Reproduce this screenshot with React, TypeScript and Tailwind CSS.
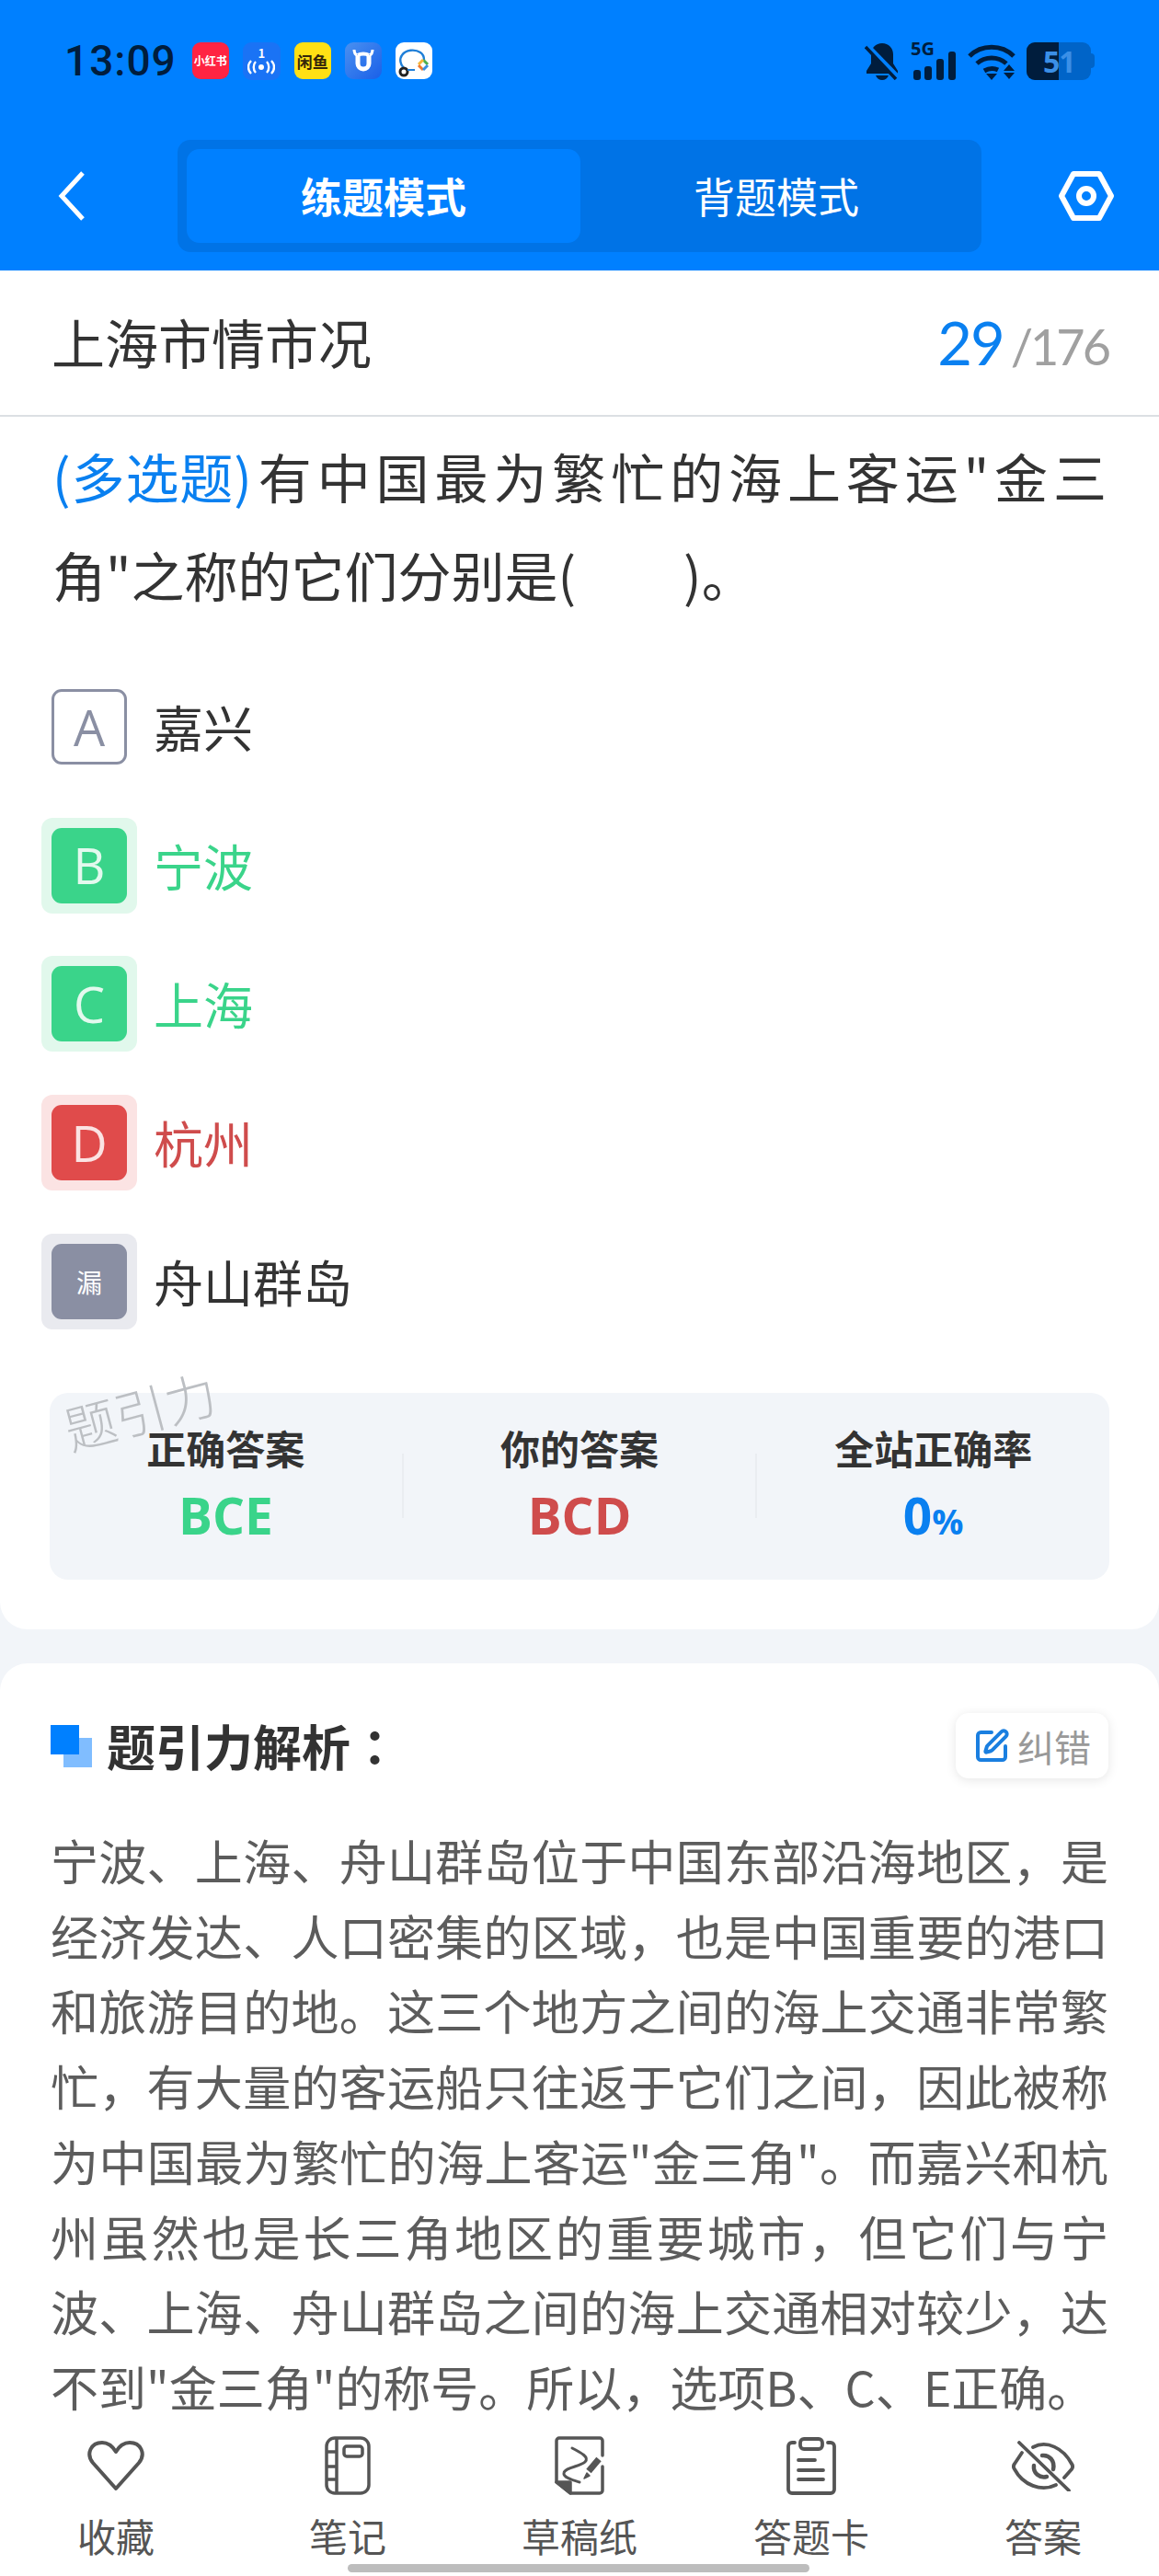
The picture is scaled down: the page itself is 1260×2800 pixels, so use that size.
import { SquarePen } from "lucide-react";

const font = "font-['Noto_Sans_CJK_SC','Noto_Sans',sans-serif]";

function Bell() {
  return (
    <svg viewBox="0 0 38 41" className="w-[38px] h-[41px]">
      <path d="M19 1c7 0 12 5 12 12v10l5 8v3H2v-3l5-8V13C7 6 12 1 19 1z" fill="#001d3d" />
      <path d="M12 36h14c-1 3-4 5-7 5s-6-2-7-5z" fill="#001d3d" />
      <path d="M2 3l34 35" stroke="#0080ff" strokeWidth="6" />
      <path d="M1 5l33 35" stroke="#001d3d" strokeWidth="3.5" />
    </svg>
  );
}

function Signal() {
  return (
    <div className="relative w-[50px] h-[41px]">
      <span className="absolute left-0 -top-[5px] text-[20px] leading-[24px] font-bold text-[#001d3d] font-['Open_Sans',sans-serif]">5G</span>
      <svg viewBox="0 0 50 41" className="absolute inset-0">
        <rect x="3" y="30" width="8" height="11" rx="3" fill="#001d3d" />
        <rect x="15" y="26" width="8" height="15" rx="3" fill="#001d3d" />
        <rect x="28" y="18" width="8" height="23" rx="3" fill="#001d3d" />
        <rect x="41" y="10" width="8" height="31" rx="3" fill="#001d3d" />
      </svg>
    </div>
  );
}

function Wifi() {
  return (
    <svg viewBox="0 0 52 41" className="w-[52px] h-[41px]" fill="none" stroke="#001d3d" strokeWidth="5">
      <path d="M2 15C15 2 37 2 50 15" />
      <path d="M10 23c9-8 23-8 32 0" />
      <path d="M18 31c5-3 11-3 15-1" />
      <path d="M20 34h12l-6 7z" fill="#001d3d" stroke="none" />
      <path d="M45 24l6 7H39z M39 33h12l-6 7z" fill="#001d3d" stroke="none" />
    </svg>
  );
}

function Battery() {
  return (
    <div className="relative flex items-center w-[74px] h-[41px]">
      <div className="flex w-[70px] h-[41px] rounded-[9px] overflow-hidden bg-[#0064c8]">
        <div className="w-[35px] bg-[#001d3d]" />
      </div>
      <div className="w-[4px] h-[16px] rounded-r bg-[#0064c8]" />
      <span className="absolute left-[18px] top-0 text-[32px] leading-[41px] font-bold text-[#3b8fe6] font-['Open_Sans',sans-serif] tracking-[-1px]">51</span>
    </div>
  );
}

function AppIcons() {
  return (
    <div className="flex items-center gap-[15px] ml-[17px]">
      <div className="w-[40px] h-[40px] rounded-[9px] bg-[#ff2442] flex items-center justify-center text-white text-[12px] font-bold whitespace-nowrap">小红书</div>
      <div className="w-[41px] h-[41px] rounded-[9px] bg-[#1a73f5] flex flex-col items-center justify-center">
        <span className="text-white text-[13px] leading-[14px] font-bold">1</span>
        <svg viewBox="0 0 30 16" className="w-[30px] h-[16px]" fill="none" stroke="white" strokeWidth="2.4">
          <circle cx="15" cy="8" r="3" fill="white" stroke="none" />
          <path d="M9 2c-3 3-3 9 0 12M21 2c3 3 3 9 0 12M4 1c-4 4-4 10 0 14M26 1c4 4 4 10 0 14" />
        </svg>
      </div>
      <div className="w-[40px] h-[40px] rounded-[9px] bg-[#ffe014] flex items-center justify-center text-[#33260a] text-[17px] leading-none font-bold whitespace-nowrap">闲鱼</div>
      <div className="w-[40px] h-[40px] rounded-[9px] bg-gradient-to-br from-[#4a90f0] to-[#1a5fe8] flex items-center justify-center">
        <svg viewBox="0 0 28 28" className="w-[28px] h-[28px]" fill="none" stroke="white" strokeWidth="5">
          <path d="M8 8v9a6 6 0 0 0 12 0V8" />
          <path d="M8 8c3-2 9-2 12 0" strokeWidth="4" />
          <path d="M4 2c0 3 1 5 3 6M24 2c0 3-1 5-3 6" strokeWidth="3" />
        </svg>
      </div>
      <div className="w-[40px] h-[40px] rounded-[9px] bg-white flex items-center justify-center">
        <svg viewBox="0 0 40 40" className="w-[40px] h-[40px]" fill="none">
          <path d="M9 28c-4-4-5-10-2-14 4-6 14-7 20-3 3 2 4 5 4 8" stroke="#1f7fd8" strokeWidth="2.4" />
          <circle cx="9" cy="32" r="4" stroke="#222" strokeWidth="3" />
          <path d="M13 30h8" stroke="#1f7fd8" strokeWidth="2" />
          <path d="M30 19l5 5" stroke="#4caf50" strokeWidth="3" />
          <path d="M30 19l-5 5" stroke="#f5b63a" strokeWidth="3" />
          <path d="M25 25l5 5" stroke="#f0792e" strokeWidth="3" />
          <path d="M35 25l-5 5" stroke="#3a8fe0" strokeWidth="3" />
        </svg>
      </div>
    </div>
  );
}

function Header() {
  return (
    <header className="h-[294px] bg-[#0080ff] shrink-0">
      <div className="flex items-center justify-between h-[152px] pl-[70px] pr-[70px] pb-[20px]">
        <div className="flex items-center">
          <span className="text-[46px] leading-none text-[#001d3d] font-medium font-['Roboto',sans-serif] tracking-[1px]">13:09</span>
          <AppIcons />
        </div>
        <div className="flex items-center gap-[12px]">
          <Bell />
          <Signal />
          <Wifi />
          <Battery />
        </div>
      </div>
      <div className="flex items-center pl-[62px] h-[122px]">
        <svg viewBox="0 0 32 56" className="w-[32px] h-[56px] mr-[99px]" fill="none" stroke="white" strokeWidth="5">
          <path d="M28 3L5 28l23 25" />
        </svg>
        <div className="flex w-[874px] h-[122px] p-[10px] rounded-[14px] bg-[#0073e6]">
          <div className="flex items-center justify-center w-[428px] rounded-[14px] bg-[#0080ff] text-white text-[45px] font-bold">练题模式</div>
          <div className="flex items-center justify-center flex-1 text-white text-[45px]">背题模式</div>
        </div>
        <svg viewBox="0 0 60 56" className="w-[60px] h-[56px] ml-[84px]" fill="none" stroke="white" strokeWidth="6" strokeLinejoin="round">
          <path d="M16 4h28l13 24-13 24H16L3 28z" />
          <circle cx="30" cy="28" r="8" />
        </svg>
      </div>
    </header>
  );
}

const options = [
  { key: "A", text: "嘉兴", box: "border-[3px] border-[#8a8fa3] text-[#8a8fa3] bg-white", halo: "", color: "text-[#333]" },
  { key: "B", text: "宁波", box: "bg-[#3ad48a] text-[#e3f9ee]", halo: "bg-[#e1f8ec]", color: "text-[#3ad48a]" },
  { key: "C", text: "上海", box: "bg-[#3ad48a] text-[#e3f9ee]", halo: "bg-[#e1f8ec]", color: "text-[#3ad48a]" },
  { key: "D", text: "杭州", box: "bg-[#e04b4b] text-[#fbe3e3]", halo: "bg-[#fbe3e3]", color: "text-[#cf4c4c]" },
  { key: "漏", text: "舟山群岛", box: "bg-[#8a8fa3] text-white", halo: "bg-[#e9eaef]", color: "text-[#333]" },
];

function Option({ item }: { item: (typeof options)[number] }) {
  return (
    <div className="flex items-center h-[104px] mb-[46.7px]">
      <div className={`flex items-center justify-center w-[104px] h-[104px] rounded-[12px] ${item.halo}`}>
        <div className={`flex items-center justify-center w-[82px] h-[82px] rounded-[11px] ${item.key === "漏" ? "text-[28px]" : "text-[54px] font-['Open_Sans',sans-serif]"} ${item.box}`}>
          {item.key}
        </div>
      </div>
      <span className={`ml-[18px] text-[54px] leading-none ${item.color}`}>{item.text}</span>
    </div>
  );
}

function Stat({ label, children }: { label: string; children: React.ReactNode }) {
  return (
    <div className="flex-1 flex flex-col items-center">
      <span className="text-[43px] leading-[52px] font-bold text-[#333]">{label}</span>
      <div className="mt-[18px] h-[60px] flex items-baseline font-bold font-['Open_Sans',sans-serif] text-[55px] leading-[60px]">{children}</div>
    </div>
  );
}

function Question() {
  return (
    <section className="bg-white rounded-b-[30px] shrink-0 h-[1477px]">
      <div className="flex items-center justify-between h-[159px] pl-[56px] pr-[55px] border-b-2 border-[#dcdfe3]">
        <h1 className="text-[58px] leading-none text-[#333] pb-[4px]">上海市情市况</h1>
        <div className="flex items-baseline font-['Lato',sans-serif]">
          <span className="text-[65px] tracking-[-2px] text-[#0a80f0]">29</span>
          <span className="ml-[8px] text-[54px] tracking-[-3px] text-[#a0a0a0]">/176</span>
        </div>
      </div>
      <div className="px-[57px] pt-[11px] text-[58px] leading-[107px] text-[#333]">
        <div className="[text-align-last:justify]">
          <span className="text-[#0a80f0] tracking-[-5px] mr-[6px]">(多选题)</span>有中国最为繁忙的海上客运"金三
        </div>
        <div>角"之称的它们分别是(&nbsp;&nbsp;&nbsp;&nbsp;&nbsp;&nbsp;&nbsp;&nbsp;&nbsp;)。</div>
      </div>
      <div className="pl-[45px] mt-[60px]">
        {options.map((o) => (
          <Option key={o.key} item={o} />
        ))}
      </div>
      <div className="relative mx-[54px] mt-[69px] flex items-start pt-[33px] h-[203px] rounded-[20px] bg-[#f2f5f9]">
        <span className="absolute left-[14px] -top-[10px] -rotate-[15deg] text-[56px] leading-none text-[#bcbfc3] font-light">题引力</span>
        <Stat label="正确答案"><span className="text-[#3ad48a]">BCE</span></Stat>
        <div className="w-[2px] h-[70px] mt-[33px] bg-[#eaedf1]" />
        <Stat label="你的答案"><span className="text-[#cf4c4c]">BCD</span></Stat>
        <div className="w-[2px] h-[70px] mt-[33px] bg-[#eaedf1]" />
        <Stat label="全站正确率">
          <span className="text-[#0a80f0]">0</span>
          <span className="text-[#0a80f0] text-[38px]">%</span>
        </Stat>
      </div>
    </section>
  );
}

function Analysis() {
  return (
    <section className="bg-white rounded-t-[30px] mt-[37px] px-[55px] pt-[54px]">
      <div className="flex items-center justify-between h-[71px]">
        <div className="flex items-center">
          <div className="relative w-[45px] h-[46px] mr-[16px]">
            <div className="absolute right-0 bottom-0 w-[31px] h-[32px] bg-[#80bdff]" />
            <div className="absolute left-0 top-0 w-[31px] h-[32px] bg-[#0080ff]" />
          </div>
          <span className="text-[53px] leading-none font-bold text-[#333]">
            题引力解析<span className="font-['Noto_Sans_CJK_TC']">：</span>
          </span>
        </div>
        <div className="flex items-center justify-center w-[166px] h-[71px] rounded-[14px] bg-white shadow-[0_2px_12px_rgba(0,0,0,0.1)] text-[40px] text-[#999]">
          <SquarePen className="w-[40px] h-[40px] text-[#1a7fe0] mr-[8px]" strokeWidth={2.4} />
          纠错
        </div>
      </div>
      <p className="mt-[48px] text-[52px] leading-[81.7px] text-[#5c5c5c] text-justify">
        宁波、上海、舟山群岛位于中国东部沿海地区，是经济发达、人口密集的区域，也是中国重要的港口和旅游目的地。这三个地方之间的海上交通非常繁忙，有大量的客运船只往返于它们之间，因此被称为中国最为繁忙的海上客运"金三角"。而嘉兴和杭州虽然也是长三角地区的重要城市，但它们与宁波、上海、舟山群岛之间的海上交通相对较少，达不到"金三角"的称号。所以，选项B、C、E正确。
      </p>
    </section>
  );
}

const navIcons = [
  <svg key="heart" viewBox="0 0 64 56" className="w-[64px] h-[56px]" fill="none" stroke="#555" strokeWidth="4" strokeLinejoin="round">
    <path d="M32 53L7 25C-1 15 5 3 17 3c7 0 12 5 15 10 3-5 8-10 15-10 12 0 18 12 10 22z" />
  </svg>,
  <svg key="note" viewBox="0 0 50 64" className="w-[50px] h-[64px]" fill="none" stroke="#555" strokeWidth="3.5">
    <rect x="2" y="2" width="46" height="60" rx="9" />
    <path d="M13 2v60M2 17h11M2 33h11M2 47h11" />
    <rect x="21" y="11" width="20" height="11" rx="3" />
  </svg>,
  <svg key="draft" viewBox="0 0 54 64" className="w-[54px] h-[64px]" fill="none" stroke="#555" strokeWidth="3.5" strokeLinejoin="round" strokeLinecap="round">
    <path d="M2 50V5a3 3 0 0 1 3-3H49a3 3 0 0 1 3 3v16M52 33V59a3 3 0 0 1-3 3H17L2 50" />
    <path d="M2 50H17V62z" fill="#555" />
    <path d="M19 13c10 5 19 10 14 15-5 5-22 6-23 12-1 5 10 8 17 10" strokeWidth="3" />
    <path d="M48 25L37 38" strokeWidth="7" strokeLinecap="butt" />
    <path d="M35 40l-3 6 6-3z" fill="#555" strokeWidth="1.5" />
  </svg>,
  <svg key="card" viewBox="0 0 54 63" className="w-[54px] h-[63px]" fill="none" stroke="#555" strokeWidth="3.8" strokeLinejoin="round" strokeLinecap="round">
    <path d="M9 6H6a4 4 0 0 0-4 4V57a4 4 0 0 0 4 4H48a4 4 0 0 0 4-4V10a4 4 0 0 0-4-4H45" />
    <rect x="15" y="2" width="24" height="11" rx="4" />
    <path d="M13 25h18M13 36h27M13 46h27" />
  </svg>,
  <svg key="eye" viewBox="0 0 68 55" className="w-[68px] h-[55px]" fill="none" stroke="#555" strokeWidth="3.8" strokeLinejoin="round" strokeLinecap="round">
    <path d="M11 13L3 25a5 5 0 0 0 0 6C12 48 32 56 48 48" />
    <path d="M23 7C38 -1 56 8 65 25a5 5 0 0 1 0 6L57 40" />
    <path d="M33 16c8-1 14 6 12 15" strokeWidth="4.5" />
    <path d="M24 27c-1 8 6 14 14 12" strokeWidth="4.5" />
    <path d="M8 2l54 52" />
  </svg>,
];

const navLabels = ["收藏", "笔记", "草稿纸", "答题卡", "答案"];

function BottomBar() {
  return (
    <nav className="relative shrink-0 h-[170px] bg-white">
      <div className="grid grid-cols-5 pt-[17px]">
        {navLabels.map((label, i) => (
          <div key={label} className="flex flex-col items-center">
            <div className="flex items-center justify-center h-[66px]">{navIcons[i]}</div>
            <span className="mt-[18px] text-[42px] leading-[50px] text-[#555]">{label}</span>
          </div>
        ))}
      </div>
      <div className="absolute left-[378px] bottom-[4px] w-[502px] h-[9px] rounded-full bg-[#bdbdbd]" />
    </nav>
  );
}

export default function App() {
  return (
    <div className={`flex flex-col h-[2800px] w-[1260px] overflow-hidden bg-[#f2f5f9] ${font}`}>
      <Header />
      <main className="flex-1 min-h-0 overflow-hidden">
        <Question />
        <Analysis />
      </main>
      <BottomBar />
    </div>
  );
}
